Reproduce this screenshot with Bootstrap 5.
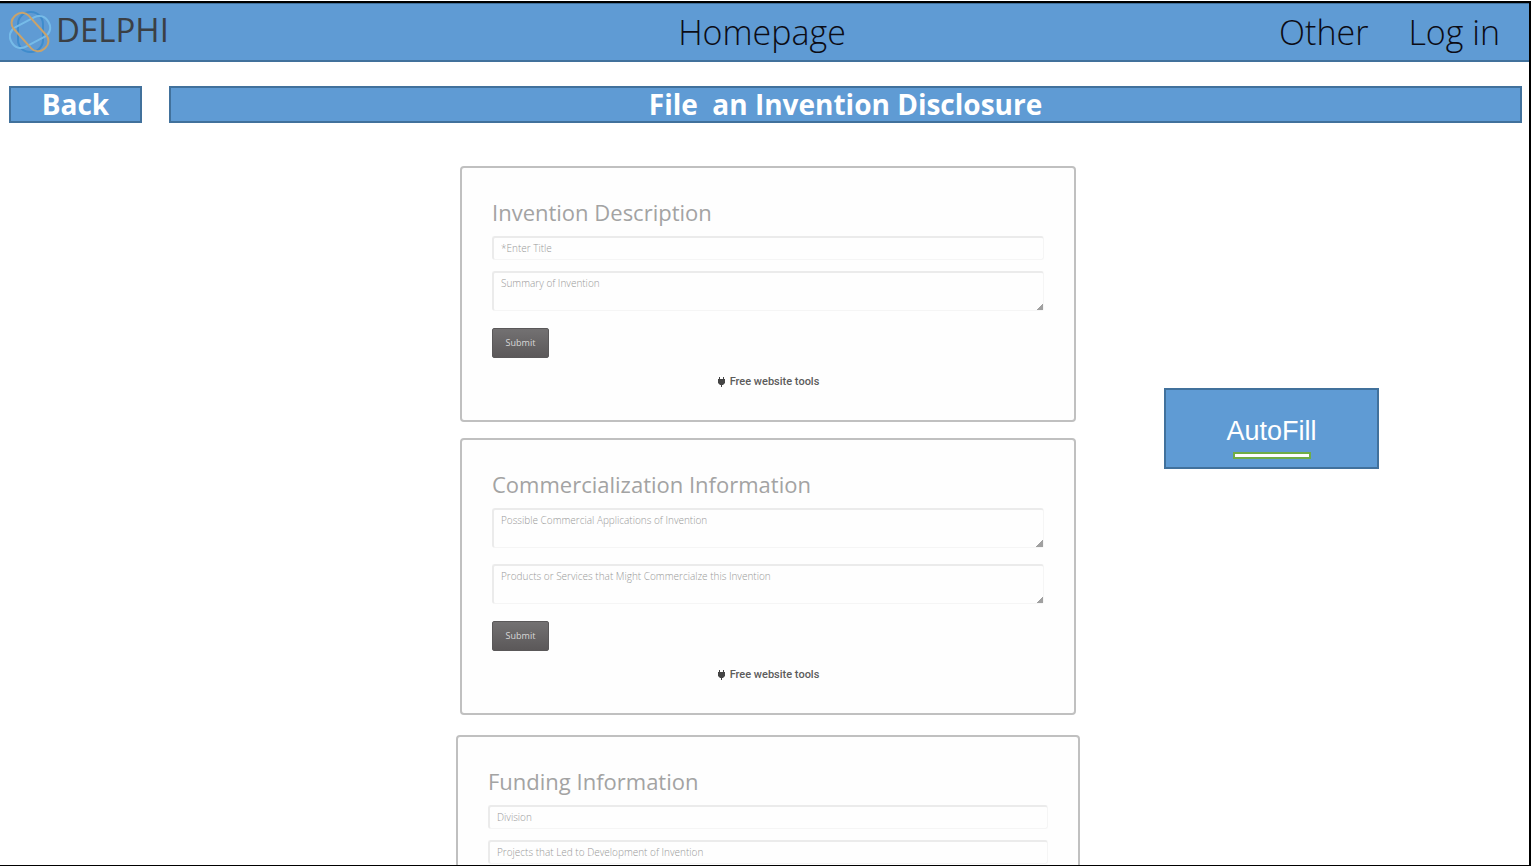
<!DOCTYPE html>
<html lang="en">
<head>
<meta charset="utf-8">
<meta name="viewport" content="width=device-width, initial-scale=1">
<title>Delphi - File an Invention Disclosure</title>
<link href="https://cdn.jsdelivr.net/npm/bootstrap@5.3.0/dist/css/bootstrap.min.css" rel="stylesheet">
<style>
  :root { --blue: #5f9bd4; --blue-edge: #41719c; }
  body { font-family: "Open Sans", sans-serif; background: #fff; }
  .frame {
    height: calc(100vh - 1px); margin: 1px 1px 0 0;
    border: solid #000; border-width: 2px 2px 1px 0;
    overflow-y: auto; scrollbar-width: none;
  }
  .frame::-webkit-scrollbar { display: none; }
  .topbar {
    display: grid; grid-template-columns: 1fr auto 1fr; align-items: center;
    height: 59px; padding: 0 14px 0 9px;
    background: var(--blue); border: solid var(--blue-edge); border-width: 1px 0 2px;
  }
  .topbar a { color: #0c0c14; text-decoration: none; font-weight: 300; font-size: 34px; line-height: 40px; }
  .topbar .brand { color: #3b3f44; font-size: 33px; font-weight: 400; line-height: 36px; }
  .topbar .brand span { padding-bottom: 4px; }
  .topbar nav { gap: 40px; padding-right: 15px; }
  .title-row { gap: 27px; padding: 24px 7px 0 9px; }
  .blue-box {
    background: var(--blue); border: 2px solid var(--blue-edge); border-radius: 0; color: #fff;
  }
  .blue-box:hover { background: #5490cb; border-color: var(--blue-edge); color: #fff; }
  .bar-text { font-size: 28px; font-weight: 700; line-height: 33px; padding: 0; }
  .back-btn { width: 133px; }
  .forms { display: grid; grid-template-columns: 1fr minmax(0, 624px) 1fr; padding: 43px 0 40px 7px; }
  .form-box {
    background: #fefefe; border: 2px solid #c0c0c0; border-radius: 4px;
    padding: 28px 30px 26px; width: 616px; max-width: 100%; margin: 0 auto 16px;
  }
  .form-box.wide { width: 624px; margin-top: 20px; }
  .form-box h2 { font-size: 22px; line-height: 32px; margin: 0 0 8px; color: #a3a3a3; font-weight: 400; }
  .field {
    display: block; font-size: 10px; font-weight: 300; line-height: 16px; padding: 2px 7px 3px; border-radius: 3px;
    border: solid; border-width: 2px 1px 1px 2px; border-color: #ebebeb #f5f5f5 #f5f5f5 #ebebeb;
    background: #fefefe; min-height: 0;
  }
  .field::placeholder { color: #999; opacity: 1; }
  input.field { height: 24px; margin-bottom: 11px; }
  textarea.field { height: 40px; min-height: 40px; margin-bottom: 16px; resize: vertical; }
  .field::-webkit-resizer {
    background: linear-gradient(135deg, transparent 50%, #a0a0a0 50%) right bottom / 7px 7px no-repeat;
  }
  .submit-btn {
    display: block; width: 57px; height: 30px; margin-top: 17px; padding: 0; font-size: 9px; line-height: 14px; color: #d8d8d8;
    border: 1px solid #5a5859; border-radius: 2px; background: linear-gradient(#737172, #5b5859);
  }
  .submit-btn:hover { color: #fff; background: #5b5859; }
  .tools { font-family: Roboto, sans-serif; font-size: 11px; line-height: 24px; font-weight: 500; margin-top: 12px; }
  .tools a { color: #5c5c5c; text-decoration: none; }
  .autofill {
    font-family: "Liberation Sans", sans-serif; font-size: 27px; line-height: 32px;
    width: 215px; height: 81px; margin: 222px 0 0 84px; padding: 25px 0 0;
  }
  .autofill .underbar { width: 78px; height: 7px; background: #fff; border: 2px solid #70ad47; margin-top: 5px; }
</style>
</head>
<body>
<div class="frame">
  <header class="topbar">
    <a href="#" class="brand d-flex align-items-center">
      <svg width="43" height="44" viewBox="0 0 43 44" fill="none" stroke-width="2" aria-hidden="true" class="me-1">
        <rect x="9" y="2" width="25" height="40" rx="12" stroke="#3f8ccc"/>
        <rect x="10" y="1" width="22" height="42" rx="10" stroke="#76bbe8" transform="rotate(62 21 22)"/>
        <rect x="11" y="0" width="20" height="44" rx="9" stroke="#c9a36b" transform="rotate(-42 21 22)"/>
      </svg>
      <span>DELPHI</span>
    </a>
    <a href="#">Homepage</a>
    <nav class="d-flex justify-content-end" aria-label="Account">
      <a href="#">Other</a>
      <a href="#">Log in</a>
    </nav>
  </header>

  <div class="title-row d-flex">
    <button type="button" class="btn blue-box bar-text back-btn">Back</button>
    <h1 class="blue-box bar-text flex-grow-1 text-center m-0">File&nbsp; an Invention Disclosure</h1>
  </div>

  <main class="forms">
    <div></div>
    <div>
      <form class="form-box">
        <h2>Invention Description</h2>
        <input type="text" class="form-control field" aria-label="Title" placeholder="*Enter Title">
        <textarea class="form-control field" aria-label="Summary of Invention" placeholder="Summary of Invention"></textarea>
        <button type="button" class="btn submit-btn">Submit</button>
        <div class="tools text-center"><a href="#"><svg width="9" height="10" viewBox="0 0 9 10" class="me-1" aria-hidden="true"><path d="M2 0h1v2h3V0h1v2h1v4L6 8H5v2H4V8H3L1 6V2h1z" fill="#444"/></svg>Free website tools</a></div>
      </form>

      <form class="form-box">
        <h2>Commercialization Information</h2>
        <textarea class="form-control field" aria-label="Possible Commercial Applications of Invention" placeholder="Possible Commercial Applications of Invention"></textarea>
        <textarea class="form-control field" aria-label="Products or Services" placeholder="Products or Services that Might Commercialze this Invention"></textarea>
        <button type="button" class="btn submit-btn">Submit</button>
        <div class="tools text-center"><a href="#"><svg width="9" height="10" viewBox="0 0 9 10" class="me-1" aria-hidden="true"><path d="M2 0h1v2h3V0h1v2h1v4L6 8H5v2H4V8H3L1 6V2h1z" fill="#444"/></svg>Free website tools</a></div>
      </form>

      <form class="form-box wide">
        <h2>Funding Information</h2>
        <input type="text" class="form-control field" aria-label="Division" placeholder="Division">
        <input type="text" class="form-control field" aria-label="Projects" placeholder="Projects that Led to Development of Invention">
      </form>
    </div>
    <div>
      <button type="button" class="btn blue-box autofill d-flex flex-column align-items-center">
        <span>AutoFill</span>
        <span class="underbar"></span>
      </button>
    </div>
  </main>
</div>
<script src="https://cdn.jsdelivr.net/npm/bootstrap@5.3.0/dist/js/bootstrap.bundle.min.js"></script>
</body>
</html>
